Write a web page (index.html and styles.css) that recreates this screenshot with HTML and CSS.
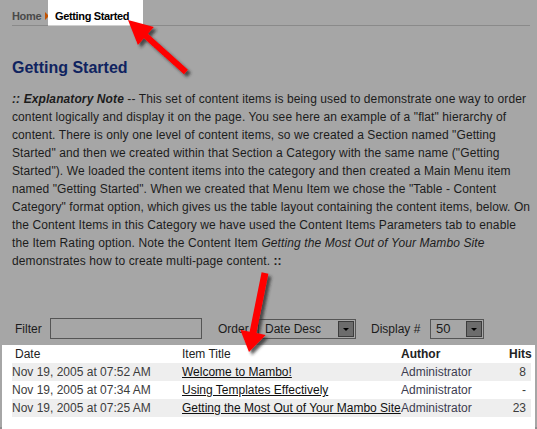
FILE: index.html
```html
<!DOCTYPE html>
<html>
<head>
<meta charset="utf-8">
<link rel="stylesheet" href="styles.css">
</head>
<body>
<div class="frame">
  <div class="page">
    <div class="crumbs">
      <span class="home">Home</span>
      <span class="sep"></span>
      <span class="current">Getting Started</span>
    </div>
    <h1 class="title">Getting Started</h1>
    <p class="intro"><b><i>:: Explanatory Note</i></b> -- This set of content items is being used to demonstrate one way to order<br>content logically and display it on the page. You see here an example of a "flat" hierarchy of<br>content. There is only one level of content items, so we created a Section named "Getting<br>Started" and then we created within that Section a Category with the same name ("Getting<br>Started"). We loaded the content items into the category and then created a Main Menu item<br>named "Getting Started". When we created that Menu Item we chose the "Table - Content<br>Category" format option, which gives us the table layout containing the content items, below. On<br>the Content Items in this Category we have used the Content Items Parameters tab to enable<br>the Item Rating option. Note the Content Item <i>Getting the Most Out of Your Mambo Site</i><br>demonstrates how to create multi-page content. <b>::</b></p>
    <div class="filters">
      <span class="lbl lbl-filter">Filter</span>
      <span class="input"></span>
      <span class="lbl lbl-order">Order</span>
      <span class="select sel-order"><span class="sel-text">Date Desc</span><span class="sel-btn"><span class="tri"></span></span></span>
      <span class="lbl lbl-display">Display #</span>
      <span class="select sel-num"><span class="sel-text">50</span><span class="sel-btn"><span class="tri"></span></span></span>
    </div>
    <div class="tablebox">
      <table class="items">
        <colgroup><col class="c-date"><col class="c-title"><col class="c-author"><col class="c-hits"></colgroup>
        <thead>
          <tr><th class="h-date">Date</th><th class="h-title">Item Title</th><th class="h-author">Author</th><th class="h-hits">Hits</th></tr>
        </thead>
        <tbody>
          <tr class="shade"><td>Nov 19, 2005 at 07:52 AM</td><td><a href="#">Welcome to Mambo!</a></td><td class="author">Administrator</td><td class="hits">8</td></tr>
          <tr><td>Nov 19, 2005 at 07:34 AM</td><td><a href="#">Using Templates Effectively</a></td><td class="author">Administrator</td><td class="hits">-</td></tr>
          <tr class="shade"><td>Nov 19, 2005 at 07:25 AM</td><td><a href="#">Getting the Most Out of Your Mambo Site</a></td><td class="author">Administrator</td><td class="hits">23</td></tr>
        </tbody>
      </table>
    </div>
  </div>
  <svg class="arrows" width="537" height="429" viewBox="0 0 537 429">
    <defs>
      <filter id="sh" x="-20%" y="-20%" width="150%" height="150%">
        <feDropShadow dx="3" dy="3" stdDeviation="1.6" flood-color="#2a2a2a" flood-opacity="0.75"/>
      </filter>
    </defs>
    <polygon filter="url(#sh)" fill="#ff0000" points="128,20 153.9,27.1 147.9,33.8 188,69.8 184,74.2 143.9,38.2 137.9,44.9"/>
    <polygon filter="url(#sh)" fill="#ff0000" points="249,352 265.7,335 256.4,333.1 268.4,273.7 261.6,272.3 249.6,331.7 240.3,329.8"/>
  </svg>
</div>
</body>
</html>
```
FILE: styles.css
```css
html, body {
  margin: 0;
  padding: 0;
}
body {
  background: #a6a6a6;
  font-family: "Liberation Sans", Arial, sans-serif;
  color: #1c1c1c;
  width: 537px;
  height: 429px;
  overflow: hidden;
}
.frame {
  position: relative;
  width: 537px;
  height: 429px;
  box-sizing: border-box;
  border-bottom: 2px solid #8e8e8e;
}
.page {
  padding: 0 7px 0 12px;
}
.crumbs {
  display: flex;
  align-items: stretch;
  height: 25px;
  border-bottom: 1px solid #8a8a8a;
  font-size: 11px;
  font-weight: bold;
  letter-spacing: -0.35px;
}
.home {
  flex: none;
  color: #4a4a4a;
  padding-top: 10px;
  width: 33px;
}
.sep {
  flex: none;
  width: 0;
  height: 0;
  margin-top: 12px;
  border-top: 4px solid transparent;
  border-bottom: 4px solid transparent;
  border-left: 4px solid #c25200;
  margin-right: -1px;
}
.current {
  flex: none;
  background: #fff;
  color: #000;
  padding: 10px 16px 0 7px;
  margin-bottom: -1px;
  border-bottom: 1px solid #cfcfcf;
  width: 72px;
  white-space: nowrap;
}
.title {
  margin: 32px 0 0 0;
  font-size: 16px;
  line-height: 20px;
  font-weight: bold;
  color: #0f2360;
}
.intro {
  margin: 12px 0 0 0;
  font-size: 12px;
  line-height: 18px;
  white-space: nowrap;
  letter-spacing: 0.1px;
  color: #1c1c1c;
}
.filters {
  display: flex;
  align-items: center;
  height: 21px;
  margin-top: 48px;
  font-size: 12px;
  color: #1c1c1c;
}
.lbl-filter { margin-left: 3px; width: 35px; }
.input {
  width: 150px;
  height: 19px;
  border: 1px solid #555;
  margin-right: 16px;
}
.lbl-order { width: 40px; }
.select {
  display: flex;
  align-items: center;
  border: 1px solid #555;
  box-sizing: border-box;
  height: 20px;
}
.sel-order { width: 98px; margin-right: 15px; }
.sel-num { width: 54px; }
.lbl-display { width: 59px; }
.sel-text {
  flex: 1;
  padding-left: 6px;
  font-size: 12px;
  color: #1a1a1a;
}
.sel-num .sel-text { font-size: 13px; padding-left: 5px; }
.sel-btn {
  width: 16px;
  height: 16px;
  margin-right: 1px;
  background: #6c6c6c;
  border: 1px solid #3c3c3c;
  box-sizing: border-box;
  display: flex;
  align-items: center;
  justify-content: center;
}
.tri {
  width: 0;
  height: 0;
  border-left: 3px solid transparent;
  border-right: 3px solid transparent;
  border-top: 3px solid #000;
  margin-top: 1px;
}
.tablebox {
  background: #fff;
  margin: 6px -5px 0 -10px;
  padding: 0 4px 7px 10px;
  height: 79px;
}
.items {
  width: 519px;
  border-collapse: collapse;
  table-layout: fixed;
  font-size: 12px;
}
.c-date { width: 170px; }
.c-title { width: 219px; }
.c-author { width: 108px; }
.c-hits { width: 22px; }
.items th, .items td {
  height: 18px;
  padding: 0;
  text-align: left;
  white-space: nowrap;
  overflow: visible;
  line-height: 18px;
}
.items th {
  color: #222;
}
.h-date { font-weight: normal; padding-left: 3px !important; }
.h-title { font-weight: normal; }
.h-author, .h-hits { font-weight: bold; }
.items td {
  color: #3c3c3c;
}
.items td.author { color: #3c3c50; }
.items td.hits { text-align: right; padding-right: 5px; }
.shade td { background: #eeeeee; }
.items a {
  color: #111;
  text-decoration: underline;
}
.arrows {
  position: absolute;
  left: 0;
  top: 0;
  pointer-events: none;
}
```
